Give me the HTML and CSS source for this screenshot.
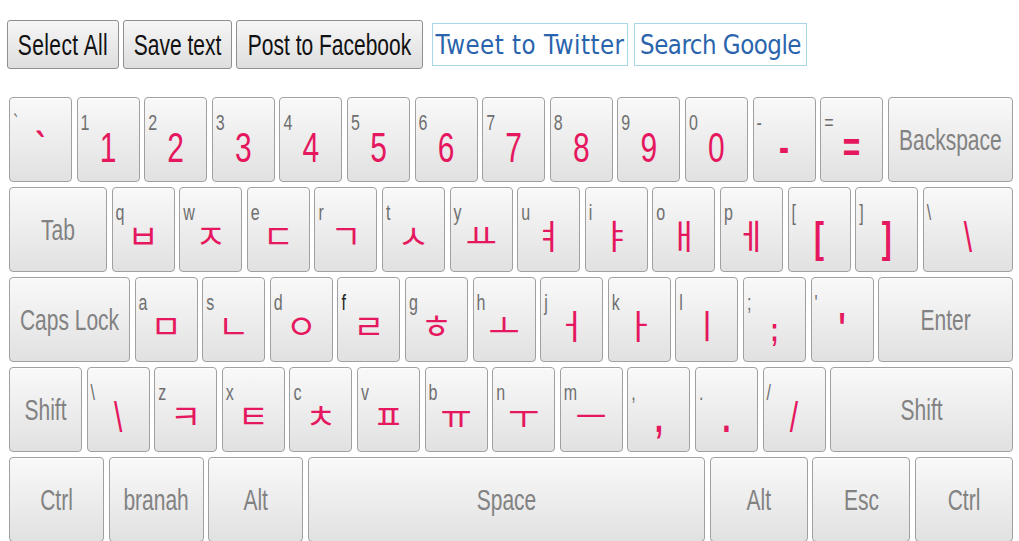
FILE: index.html
```html
<!DOCTYPE html>
<html lang="ko">
<head>
<meta charset="utf-8">
<title>Korean Keyboard</title>
<link rel="stylesheet" href="styles.css">
</head>
<body>
<div class="toolbar">
  <button class="btn b-sel"><span class="t">Select All</span></button>
  <button class="btn b-save"><span class="t">Save text</span></button>
  <button class="btn b-fb"><span class="t">Post to Facebook</span></button>
  <a class="link l-tw" href="#"><span class="t">Tweet to Twitter</span></a>
  <a class="link l-go" href="#"><span class="t">Search Google</span></a>
</div>
<div class="keyboard">
  <div class="row">
    <div class="key ch"><span class="sub">`</span><span class="main bold">`</span></div>
    <div class="key ch"><span class="sub">1</span><span class="main">1</span></div>
    <div class="key ch"><span class="sub">2</span><span class="main">2</span></div>
    <div class="key ch"><span class="sub">3</span><span class="main">3</span></div>
    <div class="key ch"><span class="sub">4</span><span class="main">4</span></div>
    <div class="key ch"><span class="sub">5</span><span class="main">5</span></div>
    <div class="key ch"><span class="sub">6</span><span class="main">6</span></div>
    <div class="key ch"><span class="sub">7</span><span class="main">7</span></div>
    <div class="key ch"><span class="sub">8</span><span class="main">8</span></div>
    <div class="key ch"><span class="sub">9</span><span class="main">9</span></div>
    <div class="key ch"><span class="sub">0</span><span class="main">0</span></div>
    <div class="key ch"><span class="sub">-</span><span class="main bold">-</span></div>
    <div class="key ch"><span class="sub">=</span><span class="main bold">=</span></div>
    <div class="key mod grow"><span class="lbl">Backspace</span></div>
  </div>
  <div class="row">
    <div class="key mod w-tab"><span class="lbl">Tab</span></div>
    <div class="key ch"><span class="sub">q</span><span class="main ko">ㅂ</span></div>
    <div class="key ch"><span class="sub">w</span><span class="main ko">ㅈ</span></div>
    <div class="key ch"><span class="sub">e</span><span class="main ko">ㄷ</span></div>
    <div class="key ch"><span class="sub">r</span><span class="main ko">ㄱ</span></div>
    <div class="key ch"><span class="sub">t</span><span class="main ko">ㅅ</span></div>
    <div class="key ch"><span class="sub">y</span><span class="main ko">ㅛ</span></div>
    <div class="key ch"><span class="sub">u</span><span class="main ko">ㅕ</span></div>
    <div class="key ch"><span class="sub">i</span><span class="main ko">ㅑ</span></div>
    <div class="key ch"><span class="sub">o</span><span class="main ko">ㅐ</span></div>
    <div class="key ch"><span class="sub">p</span><span class="main ko">ㅔ</span></div>
    <div class="key ch"><span class="sub">[</span><span class="main bold">[</span></div>
    <div class="key ch"><span class="sub">]</span><span class="main bold">]</span></div>
    <div class="key ch grow"><span class="sub">\</span><span class="main">\</span></div>
  </div>
  <div class="row">
    <div class="key mod w-caps"><span class="lbl">Caps Lock</span></div>
    <div class="key ch"><span class="sub">a</span><span class="main ko">ㅁ</span></div>
    <div class="key ch"><span class="sub">s</span><span class="main ko">ㄴ</span></div>
    <div class="key ch"><span class="sub">d</span><span class="main ko">ㅇ</span></div>
    <div class="key ch"><span class="sub dark">f</span><span class="main ko">ㄹ</span></div>
    <div class="key ch"><span class="sub">g</span><span class="main ko">ㅎ</span></div>
    <div class="key ch"><span class="sub">h</span><span class="main ko">ㅗ</span></div>
    <div class="key ch"><span class="sub">j</span><span class="main ko">ㅓ</span></div>
    <div class="key ch"><span class="sub">k</span><span class="main ko">ㅏ</span></div>
    <div class="key ch"><span class="sub">l</span><span class="main ko">ㅣ</span></div>
    <div class="key ch"><span class="sub">;</span><span class="main small">;</span></div>
    <div class="key ch"><span class="sub">'</span><span class="main bold">'</span></div>
    <div class="key mod grow"><span class="lbl">Enter</span></div>
  </div>
  <div class="row">
    <div class="key mod w-shift"><span class="lbl">Shift</span></div>
    <div class="key ch"><span class="sub">\</span><span class="main">\</span></div>
    <div class="key ch"><span class="sub">z</span><span class="main ko">ㅋ</span></div>
    <div class="key ch"><span class="sub">x</span><span class="main ko">ㅌ</span></div>
    <div class="key ch"><span class="sub">c</span><span class="main ko">ㅊ</span></div>
    <div class="key ch"><span class="sub">v</span><span class="main ko">ㅍ</span></div>
    <div class="key ch"><span class="sub">b</span><span class="main ko">ㅠ</span></div>
    <div class="key ch"><span class="sub">n</span><span class="main ko">ㅜ</span></div>
    <div class="key ch"><span class="sub">m</span><span class="main ko">ㅡ</span></div>
    <div class="key ch"><span class="sub">,</span><span class="main bold">,</span></div>
    <div class="key ch"><span class="sub">.</span><span class="main bold">.</span></div>
    <div class="key ch"><span class="sub">/</span><span class="main">/</span></div>
    <div class="key mod grow"><span class="lbl">Shift</span></div>
  </div>
  <div class="row">
    <div class="key mod w-b1"><span class="lbl">Ctrl</span></div>
    <div class="key mod w-b1"><span class="lbl">branah</span></div>
    <div class="key mod w-b1"><span class="lbl">Alt</span></div>
    <div class="key mod grow"><span class="lbl">Space</span></div>
    <div class="key mod w-b2"><span class="lbl">Alt</span></div>
    <div class="key mod w-b2"><span class="lbl">Esc</span></div>
    <div class="key mod w-b2"><span class="lbl">Ctrl</span></div>
  </div>
</div>
</body>
</html>
```
FILE: styles.css
```css
* { box-sizing: border-box; }
html, body { margin: 0; padding: 0; background: #ffffff; }
body {
  font-family: "Liberation Sans", Arial, sans-serif;
  width: 1019px;
  height: 541px;
  overflow: hidden;
}

.toolbar {
  display: flex;
  align-items: center;
  padding: 20px 0 0 7px;
  height: 69px;
  white-space: nowrap;
}

.t {
  display: inline-block;
  transform: scaleY(1.4);
  white-space: nowrap;
}

.btn {
  height: 49px;
  margin: 0 4px 0 0;
  padding: 0;
  border: 1px solid #8f8f8f;
  border-radius: 3px;
  background: linear-gradient(#f6f6f6, #dedede);
  font-family: "Liberation Sans", Arial, sans-serif;
  font-size: 21px;
  color: #111111;
  display: flex;
  align-items: center;
  justify-content: center;
}
.b-sel { width: 112px; letter-spacing: 0.4px; }
.b-save { width: 109px; }
.b-fb { width: 187px; margin-right: 9px; }

.link {
  flex: 0 0 auto;
  height: 43px;
  border: 1px solid #a9d6e8;
  background: #ffffff;
  color: #2a64ad;
  text-decoration: none;
  font-family: "DejaVu Sans", Verdana, sans-serif;
  font-size: 23px;
  display: flex;
  align-items: center;
  justify-content: center;
}
.link .t { transform: scaleY(1.18); }
.l-tw { width: 196px; margin-right: 6px; }
.l-tw .t { letter-spacing: 0.5px; }
.l-go { width: 173px; }
.l-go .t { letter-spacing: -0.5px; }

.keyboard {
  margin: 28px 0 0 9px;
  width: 1004px;
  display: flex;
  flex-direction: column;
  gap: 5px;
}

.row {
  display: flex;
  gap: 4.6px;
  height: 85px;
}

.key {
  flex: 0 0 auto;
  height: 85px;
  border: 1.5px solid #a0a0a0;
  border-radius: 4px;
  background: linear-gradient(#f9f9f9, #e1e1e1);
  box-shadow: inset 0 1px 0 #ffffff;
}
.ch {
  width: 63px;
  display: flex;
  flex-direction: column;
}
.grow { flex: 1 1 auto; }
.w-tab { width: 98px; }
.w-caps { width: 121px; }
.w-shift { width: 73px; }
.w-b1 { width: 95px; }
.w-b2 { width: 98px; }

.sub {
  align-self: flex-start;
  margin: 15px 0 0 3px;
  height: 20px;
  line-height: 20px;
  font-size: 16px;
  color: #6f6f6f;
  transform: scaleY(1.4);
}
.sub.dark { color: #222222; }

.main {
  align-self: center;
  margin-top: -2px;
  height: 34px;
  line-height: 34px;
  font-size: 30px;
  color: #e5175e;
  transform: scaleY(1.4);
}
.main.bold { font-weight: bold; }
.main.small { font-size: 24px; font-weight: bold; margin-top: 0; }
.main.ko {
  font-family: "Noto Sans CJK KR", "Liberation Sans", sans-serif;
  font-size: 34px;
  transform: none;
  margin-top: -5px;
}

.mod {
  display: flex;
  align-items: center;
  justify-content: center;
}
.lbl {
  font-size: 21px;
  color: #828282;
  display: inline-block;
  transform: scaleY(1.4);
}
```
